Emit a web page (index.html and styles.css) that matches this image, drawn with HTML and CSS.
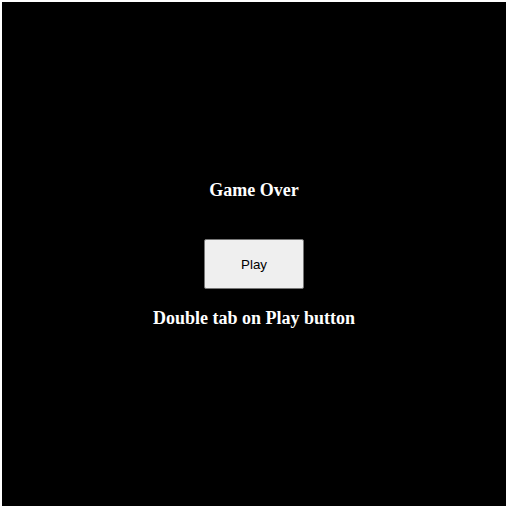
FILE: index.html
```html
<!DOCTYPE html>
<html>
<head>
<meta charset="utf-8">
<link rel="stylesheet" href="styles.css">
</head>
<body>
<div class="screen">
  <h3 class="title">Game Over</h3>
  <button class="play">Play</button>
  <h3 class="hint">Double tab on Play button</h3>
</div>
</body>
</html>
```
FILE: styles.css
```css
html, body {
  margin: 0;
  padding: 0;
  background: #fff;
}
body {
  padding: 2px;
}
.screen {
  width: 504px;
  height: 504px;
  background: #000;
  display: flex;
  flex-direction: column;
  align-items: center;
  box-sizing: border-box;
  padding-top: 178px;
  color: #fff;
  font-family: "Liberation Serif", "Times New Roman", serif;
}
.title, .hint {
  margin: 0;
  font-size: 18px;
  font-weight: bold;
  line-height: 21px;
}
.play {
  margin-top: 38px;
  width: 100px;
  height: 50px;
  background: #efefef;
  border: 1px solid #767676;
  border-radius: 2px;
  font-family: "Liberation Sans", Arial, sans-serif;
  font-size: 13.33px;
  color: #000;
}
.hint {
  margin-top: 19px;
}
```
